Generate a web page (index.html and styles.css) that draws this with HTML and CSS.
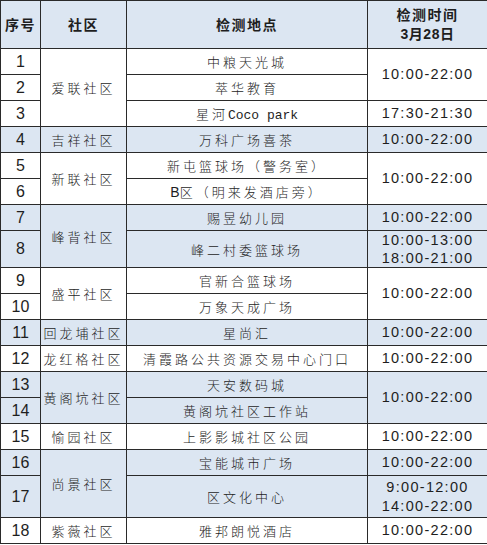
FILE: index.html
```html
<!DOCTYPE html>
<html lang="zh">
<head>
<meta charset="utf-8">
<link rel="stylesheet" href="styles.css">
</head>
<body>
<table class="sched">
  <colgroup>
    <col class="c-no"><col class="c-comm"><col class="c-loc"><col class="c-time">
  </colgroup>
  <thead>
    <tr class="head">
      <th class="zh">序号</th>
      <th class="zh">社区</th>
      <th class="zh">检测地点</th>
      <th class="zh">检测时间<br><span class="date">3月28日</span></th>
    </tr>
  </thead>
  <tbody>
    <tr><td class="num">1</td><td class="zh" rowspan="3">爱联社区</td><td class="zh">中粮天光城</td><td class="time" rowspan="2">10:00-22:00</td></tr>
    <tr><td class="num">2</td><td class="zh">萃华教育</td></tr>
    <tr><td class="num">3</td><td class="zh">星河<span class="mono">Coco park</span></td><td class="time">17:30-21:30</td></tr>
    <tr class="blue"><td class="num">4</td><td class="zh">吉祥社区</td><td class="zh">万科广场喜茶</td><td class="time">10:00-22:00</td></tr>
    <tr><td class="num">5</td><td class="zh" rowspan="2">新联社区</td><td class="zh">新屯篮球场（警务室）</td><td class="time" rowspan="2">10:00-22:00</td></tr>
    <tr><td class="num">6</td><td class="zh"><span class="lat">B</span>区（明来发酒店旁）</td></tr>
    <tr class="blue"><td class="num">7</td><td class="zh" rowspan="2">峰背社区</td><td class="zh">赐昱幼儿园</td><td class="time">10:00-22:00</td></tr>
    <tr class="blue tall8"><td class="num">8</td><td class="zh">峰二村委篮球场</td><td class="time">10:00-13:00<br>18:00-21:00</td></tr>
    <tr><td class="num">9</td><td class="zh" rowspan="2">盛平社区</td><td class="zh">官新合篮球场</td><td class="time" rowspan="2">10:00-22:00</td></tr>
    <tr><td class="num">10</td><td class="zh">万象天成广场</td></tr>
    <tr class="blue"><td class="num">11</td><td class="zh">回龙埔社区</td><td class="zh">星尚汇</td><td class="time">10:00-22:00</td></tr>
    <tr><td class="num">12</td><td class="zh">龙红格社区</td><td class="zh">清霞路公共资源交易中心门口</td><td class="time">10:00-22:00</td></tr>
    <tr class="blue"><td class="num">13</td><td class="zh" rowspan="2">黄阁坑社区</td><td class="zh">天安数码城</td><td class="time" rowspan="2">10:00-22:00</td></tr>
    <tr class="blue"><td class="num">14</td><td class="zh">黄阁坑社区工作站</td></tr>
    <tr><td class="num">15</td><td class="zh">愉园社区</td><td class="zh">上影影城社区公园</td><td class="time">10:00-22:00</td></tr>
    <tr class="blue"><td class="num">16</td><td class="zh" rowspan="2">尚景社区</td><td class="zh">宝能城市广场</td><td class="time">10:00-22:00</td></tr>
    <tr class="blue tall17"><td class="num">17</td><td class="zh">区文化中心</td><td class="time">9:00-12:00<br>14:00-22:00</td></tr>
    <tr><td class="num">18</td><td class="zh">紫薇社区</td><td class="zh">雅邦朗悦酒店</td><td class="time">10:00-22:00</td></tr>
  </tbody>
</table>
</body>
</html>
```

FILE: styles.css
```css
html, body {
  margin: 0;
  padding: 0;
  background: #ffffff;
}

.sched {
  border-collapse: collapse;
  table-layout: fixed;
  width: 487px;
  color: #1e1e1e;
}

.c-no { width: 40px; }
.c-comm { width: 86px; }
.c-loc { width: 241px; }
.c-time { width: 120px; }

.sched th,
.sched td {
  border: 1px solid #2a2a2a;
  padding: 0;
  text-align: center;
  vertical-align: middle;
  height: 25px;
  overflow: hidden;
  white-space: nowrap;
}

.head th {
  height: 47px;
  background: #dce6f2;
  font-weight: bold;
}

.head .zh {
  font-size: 14px;
  letter-spacing: 1.5px;
  line-height: 19px;
}

.date {
  font-family: "Liberation Sans", "Noto Sans CJK SC", sans-serif;
  font-size: 14px;
  letter-spacing: 0.5px;
}

.blue td {
  background: #dce6f2;
}

.zh {
  font-family: "Noto Sans CJK SC", "Noto Sans", sans-serif;
  font-size: 13px;
  font-weight: 300;
  letter-spacing: 3px;
}

.mono {
  font-family: "Liberation Mono", monospace;
  font-size: 13px;
  letter-spacing: 0;
}

.lat {
  font-family: "Liberation Sans", sans-serif;
  font-size: 14px;
  letter-spacing: 0;
}

.num {
  font-family: "Liberation Sans", sans-serif;
  font-size: 16px;
}

.time {
  font-family: "Liberation Sans", sans-serif;
  font-size: 14.5px;
  letter-spacing: 1.3px;
  line-height: 19px;
}

.tall8 td { height: 36px; }
.tall8 .time { line-height: 18px; }
.tall17 td { height: 41px; }
```
